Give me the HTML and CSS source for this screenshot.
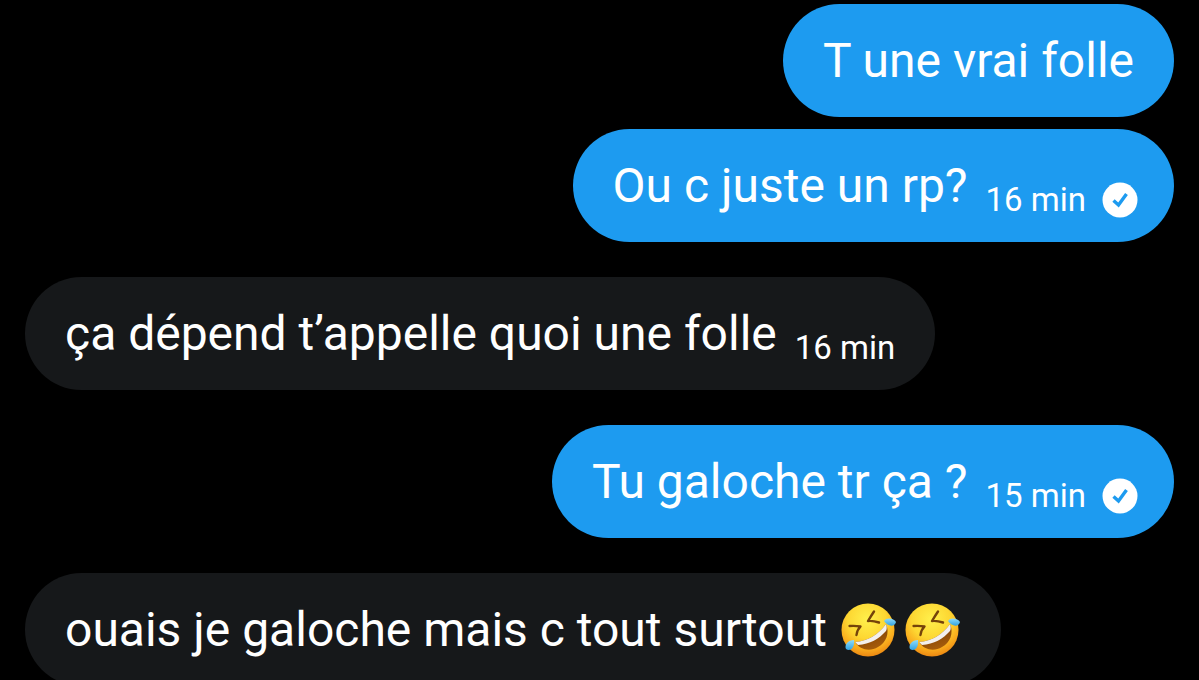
FILE: index.html
```html
<!DOCTYPE html>
<html lang="fr">
<head>
<meta charset="utf-8">
<title>Messages</title>
<link rel="stylesheet" href="styles.css">
</head>
<body>
<svg class="defs" aria-hidden="true">
  <defs>
    <radialGradient id="face" cx="0.48" cy="0.3" r="0.72">
      <stop offset="0" stop-color="#fff04c"/>
      <stop offset="0.5" stop-color="#fdd732"/>
      <stop offset="0.8" stop-color="#f9a91c"/>
      <stop offset="1" stop-color="#ea8311"/>
    </radialGradient>
    <linearGradient id="mouth" x1="0" y1="0" x2="0.4" y2="1">
      <stop offset="0" stop-color="#6b3204"/>
      <stop offset="1" stop-color="#a45b0b"/>
    </linearGradient>
    <linearGradient id="tear" x1="0" y1="0" x2="0" y2="1">
      <stop offset="0" stop-color="#8fdcfa"/>
      <stop offset="1" stop-color="#32a3e2"/>
    </linearGradient>
    <symbol id="rofl" viewBox="0 0 56 56">
      <circle cx="27" cy="28" r="26.5" fill="url(#face)"/>
      <path d="M14 40C27 39 37 33 45 22C49 31 45 41 37 45C29 50 19 48 14 40Z" fill="url(#mouth)"/>
      <path d="M14 40C27 39 37 33 45 22C46 25 46 27 45 29C38 37 29 42 17 43Z" fill="#f3f0ee"/>
      <path d="M8.500 24Q14 23.500 19.500 24.500Q16 28 15.500 33M33 9.500Q30 14 27 19Q32 18.500 38 20.500" fill="none" stroke="#75430a" stroke-width="2.400" stroke-linecap="round" stroke-linejoin="round"/>
      <path d="M43 19C45 15 53 16 55 20C54 25 47 25 43 19Z" fill="url(#tear)"/>
      <path d="M13 38C7 38 3 43 5 47C9 50 14 46 13 38Z" fill="url(#tear)"/>
    </symbol>
    <symbol id="sent" viewBox="0 0 36 36">
      <circle cx="18" cy="18" r="17.500" fill="#fff"/>
      <path d="M11.500 18.500l5 4.500 8-11" fill="none" stroke="#1d9bf0" stroke-width="3.400"/>
    </symbol>
  </defs>
</svg>
<main class="chat">
  <div class="bubble sent grouped"><p class="text">T une vrai folle</p></div>
  <div class="bubble sent delivered">
    <p class="text">Ou c juste un rp?</p>
    <span class="meta"><time>16 min</time><svg class="check" role="img" aria-label="Envoyé"><use href="#sent"/></svg></span>
  </div>
  <div class="bubble received">
    <p class="text">ça dépend t’appelle quoi une folle</p>
    <span class="meta"><time>16 min</time></span>
  </div>
  <div class="bubble sent delivered">
    <p class="text">Tu galoche tr ça ?</p>
    <span class="meta"><time>15 min</time><svg class="check" role="img" aria-label="Envoyé"><use href="#sent"/></svg></span>
  </div>
  <div class="bubble received">
    <p class="text">ouais je galoche mais c tout surtout</p>
    <span class="emojis"><svg class="emoji" role="img" aria-label="mort de rire"><use href="#rofl"/></svg><svg class="emoji" role="img" aria-label="mort de rire"><use href="#rofl"/></svg></span>
  </div>
</main>
</body>
</html>
```
FILE: styles.css
```css
body { margin: 0; background: #000; color: #fff; font-family: Roboto, "Noto Sans", sans-serif; overflow: hidden; }
.defs { position: absolute; width: 0; height: 0; }
.chat { display: flex; flex-direction: column; gap: 35px; padding: 4px 25px 0; }
.bubble { display: flex; align-items: center; gap: 18px; padding: 23px 40px 22px; border-radius: 57px; white-space: nowrap; }
.sent { align-self: flex-end; background: #1d9bf0; }
.delivered { padding-right: 36px; }
.received { align-self: flex-start; background: #16181a; }
.grouped { margin-bottom: -23px; }
.text { margin: 0; font-size: 48px; line-height: 68px; }
.meta { display: flex; align-self: flex-end; align-items: center; gap: 16px; font-size: 33px; line-height: 36px; padding-bottom: 2px; }
.check { width: 36px; height: 36px; }
.emojis { display: flex; gap: 8px; margin-left: -4px; }
.emoji { width: 56px; height: 56px; }
```
